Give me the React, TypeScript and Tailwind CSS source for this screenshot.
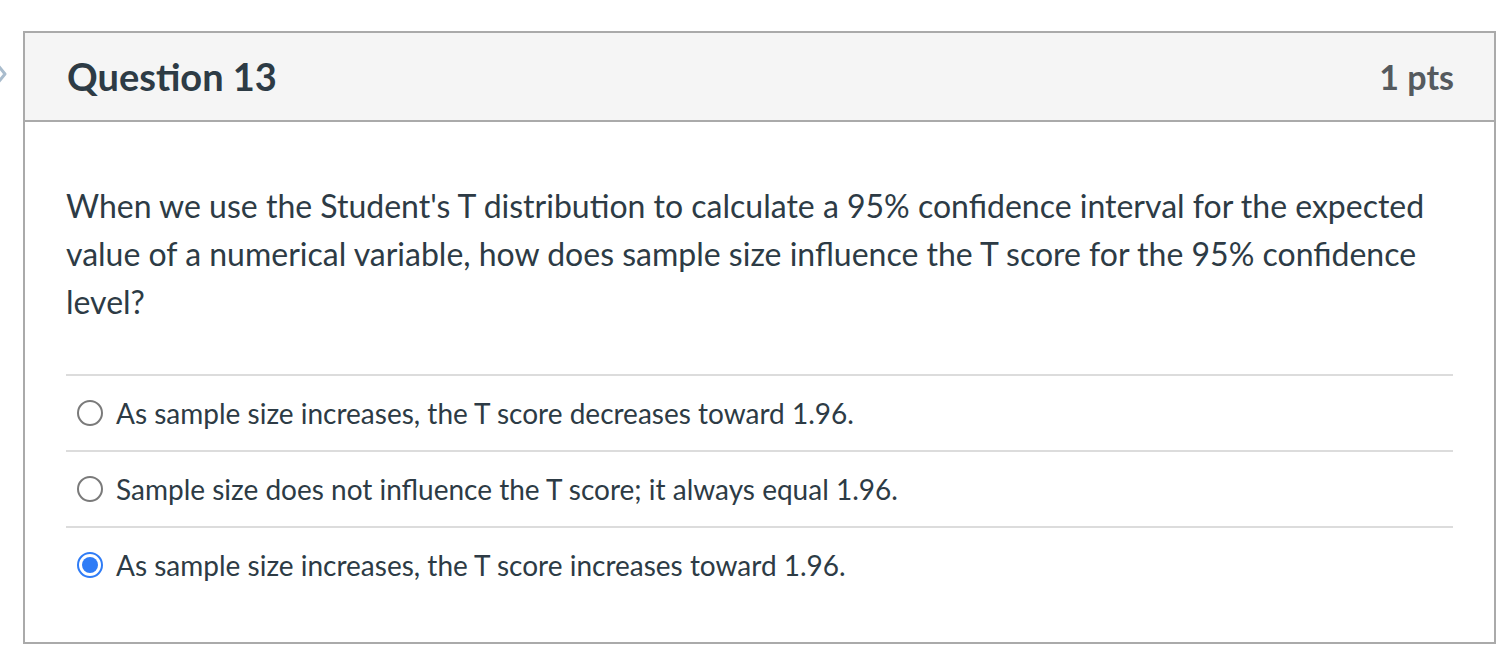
const answers = [
  { id: "a", text: "As sample size increases, the T score decreases toward 1.96.", checked: false },
  { id: "b", text: "Sample size does not influence the T score; it always equal 1.96.", checked: false },
  { id: "c", text: "As sample size increases, the T score increases toward 1.96.", checked: true },
];

function Radio({ checked }: { checked: boolean }) {
  if (checked) {
    return (
      <span className="flex h-[26px] w-[26px] shrink-0 items-center justify-center rounded-full border-[2.5px] border-[#2f7cf6] bg-white">
        <span className="h-[16px] w-[16px] rounded-full bg-[#2f7cf6]" />
      </span>
    );
  }
  return <span className="h-[26px] w-[26px] shrink-0 rounded-full border-2 border-[#7a7a7a] bg-white" />;
}

export default function App() {
  return (
    <div className="relative min-h-[658px] bg-white pl-[23px] pt-[31px] font-['Lato','Noto_Sans',sans-serif] text-[#2d3b45]">
      <svg className="absolute left-0 top-[60px]" width="8" height="28" viewBox="0 0 8 28">
        <path d="M-4 3 L5 14 L-4 25" fill="none" stroke="#a9bccd" strokeWidth="3" strokeLinejoin="round" />
      </svg>

      <div className="w-[1473px] border-2 border-[#aaaaaa] bg-white">
        <div className="flex h-[89px] items-center justify-between border-b-2 border-[#aaaaaa] bg-[#f5f5f5] pl-[42px] pr-[40px]">
          <h2 className="text-[38px] font-bold">Question 13</h2>
          <span className="text-[34px] font-bold text-[#555a5e]">1 pts</span>
        </div>

        <div className="px-[41px] pb-[40px] pt-[60px]">
          <p className="text-[32px] leading-[48px]">
            When we use the Student's T distribution to calculate a 95% confidence interval for the expected value of a numerical variable, how does sample size influence the T score for the 95% confidence level?
          </p>

          <div className="mt-[48px]">
            {answers.map((a) => (
              <div key={a.id} className="border-t-2 border-[#dcdcdc]">
                <label className="flex h-[74px] items-center gap-[13px] pl-[11px] text-[28px]">
                  <Radio checked={a.checked} />
                  <span>{a.text}</span>
                </label>
              </div>
            ))}
          </div>
        </div>
      </div>
    </div>
  );
}
